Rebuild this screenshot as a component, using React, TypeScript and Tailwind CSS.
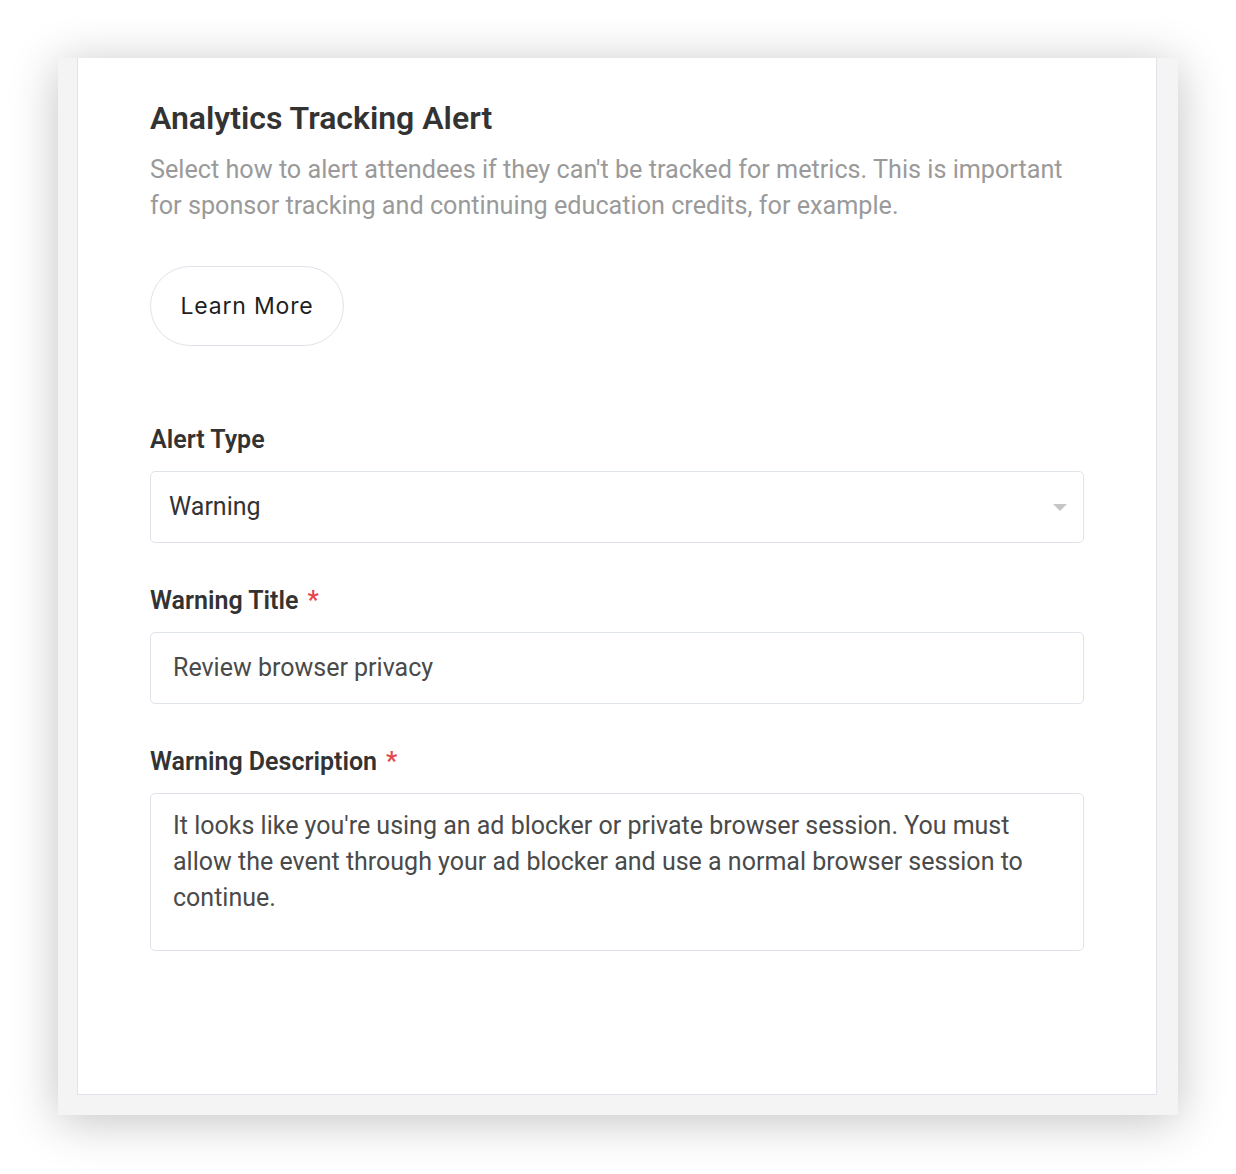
import React from "react";

export default function App() {
  return (
    <div className="min-h-[1174px] w-[1236px] bg-white pl-[58px] pt-[58px]" style={{ fontFamily: "Roboto, 'Liberation Sans', sans-serif" }}>
      <div className="w-[1120px] h-[1057px] bg-[#f4f4f4] pl-[19px] pr-[21px] pb-[20px] shadow-[0_6px_45px_rgba(0,0,0,0.24)] flex">
        <div className="flex-1 bg-white border-x border-b border-[#dfe3ea] pl-[72px] pr-[72px] pt-[42px]">
          <h1 className="text-[32px] leading-[36px] font-semibold text-[#333333]">Analytics Tracking Alert</h1>
          <p className="mt-[16px] text-[25.2px] leading-[36px] text-[#9a9a9a]">
            Select how to alert attendees if they can't be tracked for metrics. This is important for sponsor tracking and continuing education credits, for example.
          </p>
          <button
            type="button"
            className="mt-[42px] h-[80px] w-[194px] rounded-full border border-[#dfe4ea] bg-white text-[23px] tracking-[0.8px] text-[#1f1f1f] flex items-center justify-center"
            style={{ fontFamily: "Inter, Roboto, sans-serif" }}
          >
            Learn More
          </button>

          <div className="mt-[79px]">
            <label className="block text-[25px] leading-[30px] font-semibold text-[#333333]">Alert Type</label>
            <div className="mt-[16px] h-[72px] rounded-[5px] border border-[#dfe3ea] flex items-center justify-between pl-[18px] pr-[14px]">
              <span className="text-[25px] text-[#333333]">Warning</span>
              <svg width="16" height="9" viewBox="0 0 16 9" className="mr-[1px]">
                <path d="M1 1 L15 1 L8 8 Z" fill="#c6c6c6" />
              </svg>
            </div>
          </div>

          <div className="mt-[43px]">
            <label className="flex items-center text-[25px] leading-[30px] font-semibold text-[#333333]">
              Warning Title<span className="ml-[9px] text-[#e5484d]">*</span>
            </label>
            <div className="mt-[16px] h-[72px] rounded-[5px] border border-[#dfe3ea] flex items-center pl-[22px]">
              <span className="text-[25px] text-[#4a4a4a]">Review browser privacy</span>
            </div>
          </div>

          <div className="mt-[43px]">
            <label className="flex items-center text-[25px] leading-[30px] font-semibold text-[#333333]">
              Warning Description<span className="ml-[9px] text-[#e5484d]">*</span>
            </label>
            <div className="mt-[16px] h-[158px] rounded-[5px] border border-[#dfe3ea] pl-[22px] pr-[22px] pt-[14px]">
              <p className="text-[25px] leading-[36px] text-[#4a4a4a]">
                It looks like you're using an ad blocker or private browser session. You must allow the event through your ad blocker and use a normal browser session to continue.
              </p>
            </div>
          </div>
        </div>
      </div>
    </div>
  );
}
